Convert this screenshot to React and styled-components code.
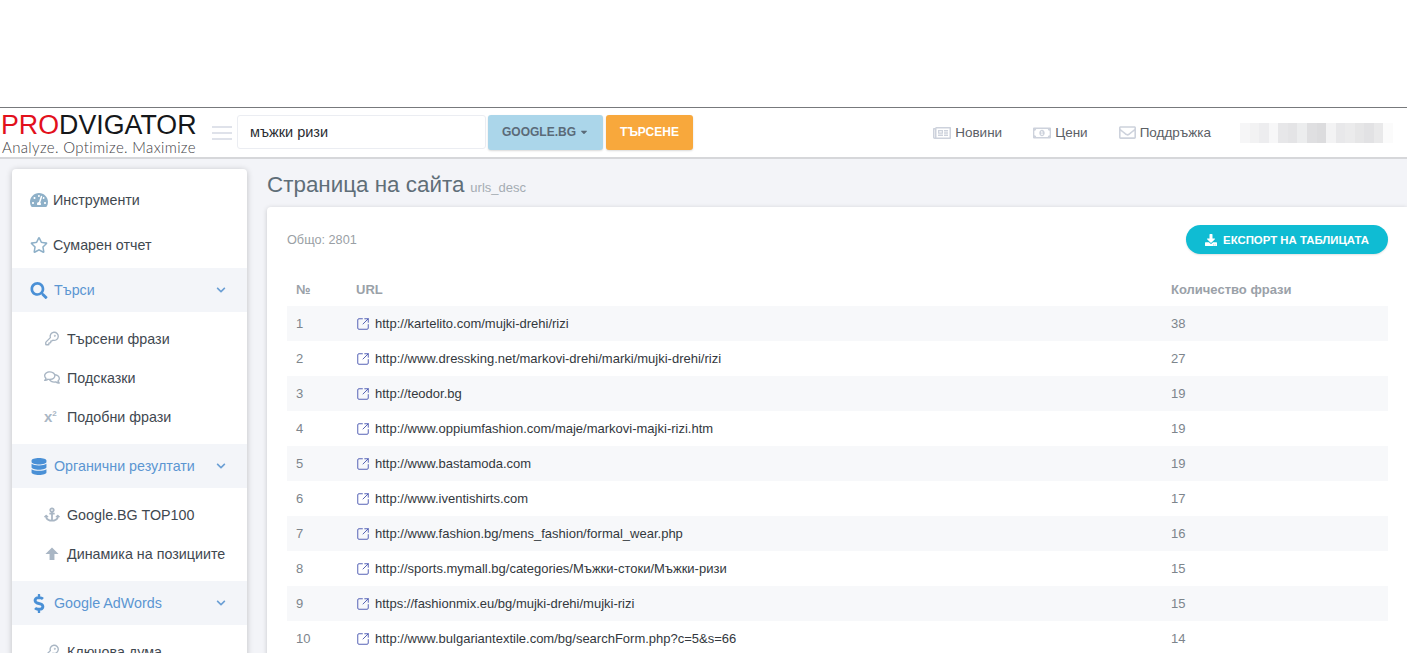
import styled, { createGlobalStyle } from "styled-components";
import {
  FaTachometerAlt,
  FaRegStar,
  FaSearch,
  FaRegComments,
  FaDatabase,
  FaAnchor,
  FaDollarSign,
  FaDownload,
  FaRegNewspaper,
  FaRegMoneyBillAlt,
  FaRegEnvelope,
  FaCaretDown,
  FaChevronDown,
} from "react-icons/fa";
import { SquareArrowOutUpRight, KeyRound } from "lucide-react";

const rows = [
  ["http://kartelito.com/mujki-drehi/rizi", 38],
  ["http://www.dressking.net/markovi-drehi/marki/mujki-drehi/rizi", 27],
  ["http://teodor.bg", 19],
  ["http://www.oppiumfashion.com/maje/markovi-majki-rizi.htm", 19],
  ["http://www.bastamoda.com", 19],
  ["http://www.iventishirts.com", 17],
  ["http://www.fashion.bg/mens_fashion/formal_wear.php", 16],
  ["http://sports.mymall.bg/categories/Мъжки-стоки/Мъжки-ризи", 15],
  ["https://fashionmix.eu/bg/mujki-drehi/mujki-rizi", 15],
  ["http://www.bulgariantextile.com/bg/searchForm.php?c=5&s=66", 14],
];

const blurCells = [
  "#f6f6f7", "#f2f2f3", "#ededef", "#f7f7f8", "#e7e7e9", "#e4e4e6", "#ecedee", "#dfdfe1",
  "#dcdcde", "#f3f3f4", "#e8e8ea", "#ebebec", "#e6e6e7", "#e2e2e4", "#e9e9ea", "#fbfbfb",
];

function UpArrow() {
  return (
    <svg viewBox="0 0 16 16" width="15" height="15">
      <path d="M8 1.5 15 8.5H10.6V15H5.4V8.5H1Z" fill="currentColor" />
    </svg>
  );
}

function App() {
  return (
    <Page>
      <GlobalStyle />
      <Header>
        <Logo>
          <LogoName>
            <b>PRO</b>DVIGATOR
          </LogoName>
          <LogoTag>Analyze. Optimize. Maximize</LogoTag>
        </Logo>
        <Burger>
          <i />
          <i />
          <i />
        </Burger>
        <SearchInput>мъжки ризи</SearchInput>
        <EngineButton>
          GOOGLE.BG <FaCaretDown size={10} />
        </EngineButton>
        <SearchButton>ТЪРСЕНЕ</SearchButton>
        <TopNav>
          <TopLink>
            <FaRegNewspaper size={18} /> Новини
          </TopLink>
          <TopLink>
            <FaRegMoneyBillAlt size={18} /> Цени
          </TopLink>
          <TopLink>
            <FaRegEnvelope size={17} /> Поддръжка
          </TopLink>
          <BlurredUser>
            {blurCells.map((c, i) => (
              <span key={i} style={{ background: c }} />
            ))}
          </BlurredUser>
        </TopNav>
      </Header>
      <Body>
        <Sidebar>
          <MenuItem>
            <FaTachometerAlt size={18} /> Инструменти
          </MenuItem>
          <MenuItem>
            <FaRegStar size={18} /> Сумарен отчет
          </MenuItem>
          <MenuGroup>
            <FaSearch size={17} /> Търси
            <FaChevronDown className="arrow" size={10} />
          </MenuGroup>
          <SubList>
            <SubItem>
              <KeyRound size={15} strokeWidth={2.2} /> Търсени фрази
            </SubItem>
            <SubItem>
              <FaRegComments size={15} /> Подсказки
            </SubItem>
            <SubItem>
              <SuperIcon>
                x<sup>2</sup>
              </SuperIcon>
              Подобни фрази
            </SubItem>
          </SubList>
          <MenuGroup>
            <FaDatabase size={17} /> Органични резултати
            <FaChevronDown className="arrow" size={10} />
          </MenuGroup>
          <SubList>
            <SubItem>
              <FaAnchor size={15} /> Google.BG TOP100
            </SubItem>
            <SubItem>
              <UpArrow /> Динамика на позициите
            </SubItem>
          </SubList>
          <MenuGroup>
            <FaDollarSign size={19} /> Google AdWords
            <FaChevronDown className="arrow" size={10} />
          </MenuGroup>
          <SubList>
            <SubItem>
              <KeyRound size={15} strokeWidth={2.2} /> Ключова дума
            </SubItem>
          </SubList>
        </Sidebar>
        <Content>
          <Title>
            Страница на сайта <small>urls_desc</small>
          </Title>
          <Panel>
            <PanelTop>
              <Total>Общо: 2801</Total>
              <ExportButton>
                <FaDownload size={12} /> ЕКСПОРТ НА ТАБЛИЦАТА
              </ExportButton>
            </PanelTop>
            <Table>
              <thead>
                <tr>
                  <th>№</th>
                  <th>URL</th>
                  <th>Количество фрази</th>
                </tr>
              </thead>
              <tbody>
                {rows.map(([url, count], i) => (
                  <tr key={url}>
                    <td>{i + 1}</td>
                    <td>
                      <UrlCell>
                        <SquareArrowOutUpRight size={14} strokeWidth={1.6} color="#4a58b0" />
                        {url}
                      </UrlCell>
                    </td>
                    <td>{count}</td>
                  </tr>
                ))}
              </tbody>
            </Table>
          </Panel>
        </Content>
      </Body>
    </Page>
  );
}

export default App;

const GlobalStyle = createGlobalStyle`
  html, body {
    margin: 0;
    padding: 0;
    overflow: hidden;
    background: #fff;
    font-family: "Liberation Sans", Arial, sans-serif;
  }
  * {
    box-sizing: border-box;
  }
`;

const Page = styled.div`
  height: 653px;
  overflow: hidden;
  padding-top: 107px;
  background: #fff;
`;

const Header = styled.header`
  height: 52px;
  display: flex;
  align-items: center;
  border-top: 1px solid #77797c;
  border-bottom: 2px solid #d6d7da;
  background: #fff;
`;

const Logo = styled.div`
  width: 212px;
  flex: none;
  padding-left: 1px;
  padding-top: 1px;
`;

const LogoName = styled.div`
  font-size: 26.8px;
  line-height: 28px;
  color: #15171a;
  b {
    font-weight: 400;
    color: #e2101c;
  }
`;

const LogoTag = styled.div`
  font-family: "Lato", sans-serif;
  font-weight: 300;
  font-size: 15px;
  line-height: 16px;
  padding-left: 1px;
  color: #3f4246;
  letter-spacing: 0.35px;
`;

const Burger = styled.div`
  width: 20px;
  flex: none;
  display: flex;
  flex-direction: column;
  gap: 4px;
  margin-top: 1px;
  i {
    display: block;
    height: 2px;
    background: #dfe2ea;
  }
`;

const SearchInput = styled.div`
  width: 249px;
  height: 34px;
  flex: none;
  margin: -2px 0 0 5px;
  padding-left: 12px;
  display: flex;
  align-items: center;
  border: 1px solid #ebedf2;
  border-radius: 3px;
  font-size: 14.5px;
  color: #2b2e33;
`;

const EngineButton = styled.div`
  width: 115px;
  height: 35px;
  flex: none;
  margin: -1px 0 0 2px;
  display: flex;
  align-items: center;
  justify-content: center;
  gap: 3px;
  background: #abd6ea;
  border-radius: 3px;
  box-shadow: 0 1px 2px rgba(0, 0, 0, 0.15);
  font-size: 12px;
  font-weight: 700;
  color: #5a6a78;
`;

const SearchButton = styled.div`
  width: 87px;
  height: 35px;
  flex: none;
  margin: -1px 0 0 3px;
  display: flex;
  align-items: center;
  justify-content: center;
  background: #f8a83c;
  border-radius: 3px;
  box-shadow: 0 1px 2px rgba(0, 0, 0, 0.15);
  font-size: 12px;
  font-weight: 700;
  color: #fff;
`;

const TopNav = styled.nav`
  margin-left: auto;
  display: flex;
  align-items: center;
  padding-right: 14px;
`;

const TopLink = styled.div`
  display: flex;
  align-items: center;
  gap: 4px;
  margin-right: 31px;
  font-size: 13.5px;
  color: #5b6066;
  svg {
    color: #cdd2dc;
  }
`;

const BlurredUser = styled.div`
  width: 153px;
  height: 20px;
  margin-left: -2px;
  display: grid;
  grid-template-columns: repeat(16, 1fr);
  span {
    display: block;
  }
`;

const Body = styled.div`
  display: flex;
  height: 494px;
  background: #f3f4f8;
`;

const Sidebar = styled.aside`
  width: 235px;
  flex: none;
  margin: 10px 0 0 12px;
  padding-top: 9px;
  background: #fff;
  border-radius: 4px 4px 0 0;
  box-shadow: 0 1px 6px rgba(0, 0, 0, 0.22);
  height: 520px;
`;

const MenuItem = styled.div`
  height: 45px;
  padding: 0 0 2px 18px;
  display: flex;
  align-items: center;
  gap: 5px;
  font-size: 14.3px;
  color: #3f4850;
  svg {
    color: #8eb0c8;
  }
`;

const MenuGroup = styled.div`
  height: 44px;
  padding-left: 18px;
  display: flex;
  align-items: center;
  gap: 6px;
  font-size: 14.3px;
  color: #5b96d2;
  background: #f3f5f9;
  svg {
    color: #4a90d6;
    width: 18px;
  }
  svg.arrow {
    margin-left: auto;
    margin-right: 20px;
    width: 12px;
    color: #6b9fd4;
  }
`;

const SubList = styled.div`
  padding: 7px 0 8px;
`;

const SubItem = styled.div`
  height: 39px;
  padding-left: 32px;
  display: flex;
  align-items: center;
  gap: 7px;
  font-size: 14.3px;
  color: #3f4850;
  svg {
    color: #a9b6c4;
    width: 16px;
  }
`;

const SuperIcon = styled.span`
  width: 16px;
  font-size: 15px;
  font-weight: 700;
  line-height: 1;
  color: #a9b6c4;
  sup {
    font-size: 8px;
    vertical-align: 6px;
    line-height: 0;
  }
`;

const Content = styled.main`
  flex: 1;
  min-width: 0;
  margin-left: 20px;
`;

const Title = styled.h1`
  height: 48px;
  margin: 0;
  padding-top: 3px;
  display: flex;
  align-items: center;
  gap: 6px;
  font-size: 22.4px;
  font-weight: 400;
  color: #5f6e78;
  small {
    margin-top: 6px;
    font-size: 13px;
    color: #a5acb3;
  }
`;

const Panel = styled.section`
  height: 460px;
  padding: 18px 19px 0 20px;
  background: #fff;
  border-radius: 4px 0 0 0;
  box-shadow: 0 1px 5px rgba(0, 0, 0, 0.18);
`;

const PanelTop = styled.div`
  height: 29px;
  display: flex;
  align-items: center;
  justify-content: space-between;
`;

const Total = styled.div`
  font-size: 12.7px;
  color: #9a9fa5;
`;

const ExportButton = styled.div`
  width: 202px;
  height: 29px;
  display: flex;
  align-items: center;
  justify-content: center;
  gap: 6px;
  border-radius: 15px;
  background: #0fbcd3;
  box-shadow: 0 1px 2px rgba(0, 0, 0, 0.12);
  font-size: 11.4px;
  font-weight: 700;
  color: #fff;
`;

const Table = styled.table`
  width: 100%;
  margin-top: 17px;
  border-collapse: collapse;
  table-layout: fixed;
  font-size: 13px;
  th {
    height: 35px;
    padding: 2px 0 0 9px;
    text-align: left;
    font-size: 13px;
    font-weight: 700;
    color: #9aa1a8;
    vertical-align: middle;
  }
  th:nth-child(1),
  td:nth-child(1) {
    width: 60px;
  }
  th:nth-child(2),
  td:nth-child(2) {
    padding-left: 9px;
  }
  th:nth-child(3),
  td:nth-child(3) {
    width: 226px;
  }
  td {
    height: 35px;
    padding: 0 0 0 9px;
    color: #7d858c;
    vertical-align: middle;
  }
  tbody tr:nth-child(odd) {
    background: #f7f8fa;
  }
`;

const UrlCell = styled.div`
  display: flex;
  align-items: center;
  gap: 5px;
  color: #33383d;
  white-space: nowrap;
`;
